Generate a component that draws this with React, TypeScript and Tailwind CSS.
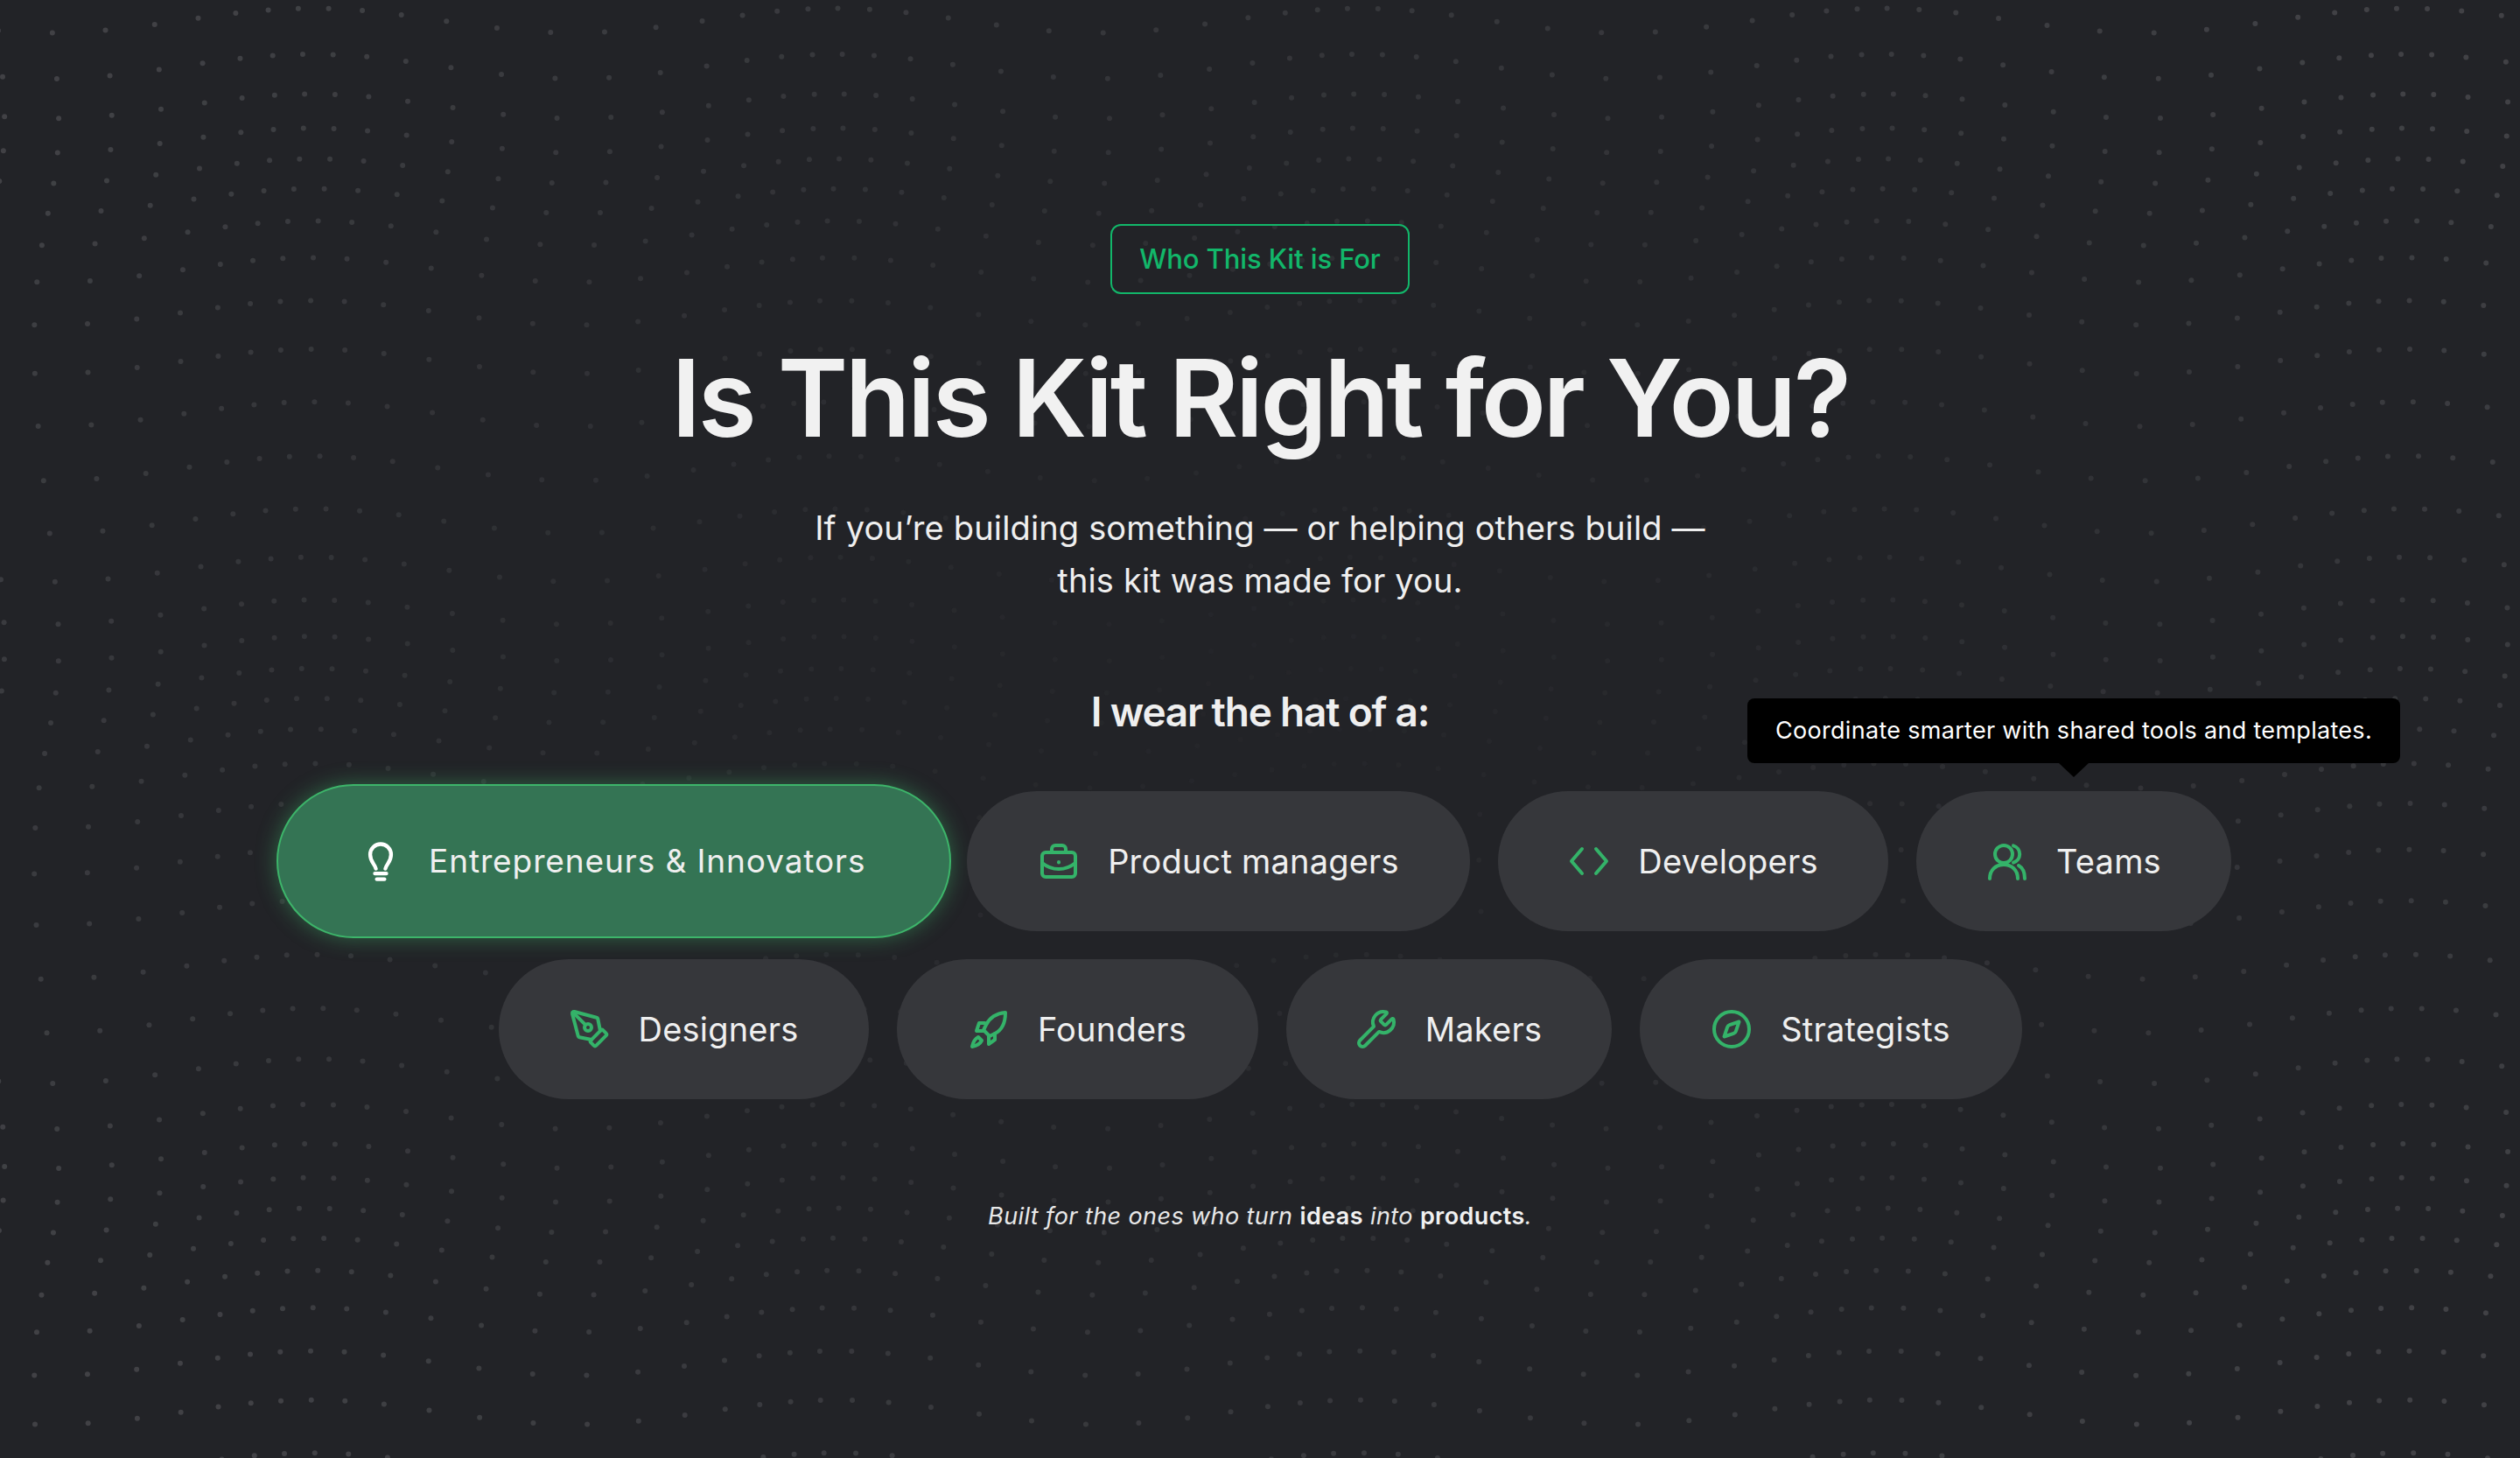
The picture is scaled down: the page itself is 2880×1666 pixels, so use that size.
import { Compass, PenTool, Wrench } from 'lucide-react'
import type { ReactNode } from 'react'

function Icon({ children, className = 'w-12 h-12' }: { children: ReactNode; className?: string }) {
  return (
    <svg className={`${className} shrink-0`} viewBox="0 0 24 24" fill="none" stroke="currentColor" strokeWidth={2} strokeLinecap="round" strokeLinejoin="round">
      {children}
    </svg>
  )
}

const BulbIcon = () => (
  <Icon className="w-[52px] h-[52px]">
    <path d="M9.5 16C9 13.5 6.5 12.5 6.5 8.5a5.5 5.5 0 0 1 11 0c0 4-2.5 5-3 7.5" />
    <path d="M9 18.5h6" />
    <path d="M10 21.5h4" />
  </Icon>
)

const CaseIcon = () => (
  <Icon>
    <rect x="2.5" y="7" width="19" height="14" rx="2" />
    <path d="M8 7V5a2 2 0 0 1 2-2h4a2 2 0 0 1 2 2v2" />
    <path d="M2.5 13c3 2.5 6 3.5 9.5 3.5s6.5-1 9.5-3.5" />
    <path d="M12 12.5v.2" />
  </Icon>
)

const ChevronsIcon = () => (
  <Icon>
    <path d="M8 5l-6 7 6 7" />
    <path d="M16 5l6 7-6 7" />
  </Icon>
)

const TeamIcon = () => (
  <Icon>
    <circle cx="10" cy="8" r="5" />
    <path d="M2 22c0-5 3.5-8 8-8s8 3 8 8" />
    <path d="M15.5 3.2a5 5 0 0 1 0 9.6" />
    <path d="M18.5 14.5c2.2 1.2 3.5 4 3.5 7.5" />
  </Icon>
)

const RocketIcon = () => (
  <Icon>
    <path d="M21.5 2.5c-5 .5-9 3-11 7L9 12.5l3.5 3.5 3-1.5c4-2 6-6 6-12z" />
    <path d="M9.8 8.5H6.5L5 13h4.5" />
    <path d="M15.5 14.5V18l-3.5 2.5V16" />
    <path d="M6 16.5c-2 1-3 3-3.5 5.5 2.5-.5 4.5-1.5 5.5-3.5z" />
  </Icon>
)

const pills = [
  { label: 'Product managers', icon: <CaseIcon />, width: 'w-[575px]' },
  { label: 'Developers', icon: <ChevronsIcon />, width: 'w-[446px]' },
  { label: 'Teams', icon: <TeamIcon />, width: 'w-[360px]', tip: 'Coordinate smarter with shared tools and templates.' },
  { label: 'Designers', icon: <PenTool className="w-12 h-12 shrink-0" strokeWidth={2} />, width: 'w-[423px]' },
  { label: 'Founders', icon: <RocketIcon />, width: 'w-[413px]' },
  { label: 'Makers', icon: <Wrench className="w-12 h-12 shrink-0" strokeWidth={2} />, width: 'w-[372px]' },
  { label: 'Strategists', icon: <Compass className="w-12 h-12 shrink-0" strokeWidth={2} />, width: 'w-[437px]' },
]

// warped dot field behind the page
function Dots() {
  const dots: { x: number; y: number; o: number }[] = []
  for (let i = -4; i < 66; i++) {
    for (let j = -4; j < 42; j++) {
      const u = i * 48
      const v = j * 48
      const x = u + 28 * Math.sin(0.0105 * u - 0.32) + 14 * Math.sin(0.0105 * v + 0.5)
      const y = v + 28 * Math.sin(0.0105 * v + 1) + 14 * Math.sin(0.0105 * x + 0.97)
      const d = Math.hypot((x - 1440) / 1440, (y - 800) / 900)
      dots.push({ x, y, o: Math.min(0.85, 0.08 + 0.6 * d ** 1.5) })
    }
  }
  return (
    <svg className="absolute inset-0 w-full h-full" viewBox="0 0 2880 1666">
      {dots.map((d, i) => (
        <circle key={i} cx={d.x} cy={d.y} r={3} fill="#46474b" opacity={d.o} />
      ))}
    </svg>
  )
}

export default function App() {
  return (
    <div className="relative h-[1666px] overflow-hidden bg-[#222327] font-['Inter',sans-serif] text-[#efefef]">
      <Dots />
      <main className="relative flex flex-col items-center pt-[256px]">
        <div className="h-20 w-[342px] flex items-center justify-center rounded-xl border-2 border-[#12b76a] text-[31px] font-medium tracking-[-0.1px] text-[#12b76a]">
          Who This Kit is For
        </div>
        <h1 className="mt-[42px] text-[122px] leading-[154px] font-semibold tracking-[-3.4px] text-[#f1f1f1]">Is This Kit Right for You?</h1>
        <p className="mt-[41px] text-[38px] leading-[60px] text-center tracking-[0.15px]">
          If you’re building something — or helping others build —
          <br />
          this kit was made for you.
        </p>
        <h2 className="mt-[88px] text-[46px] leading-[64px] font-semibold tracking-[-1.2px]">I wear the hat of a:</h2>
        <div className="mt-[59px] max-w-[2400px] flex flex-wrap justify-center gap-8">
          <div className="h-[176px] w-[771px] -mx-[14px] -my-2 flex items-center pl-[91px] gap-[29px] rounded-full border-2 border-[#3db56a] bg-[#347454] text-white shadow-[0_0_24px_rgba(61,181,106,0.45)]">
            <BulbIcon />
            <span className="text-[37px] text-[#efefef] tracking-[0.9px] whitespace-nowrap">Entrepreneurs &amp; Innovators</span>
          </div>
          {pills.map(p => (
            <div key={p.label} className={`relative h-40 ${p.width} flex items-center justify-center gap-8 rounded-full bg-[#36373b] text-[#34b369]`}>
              {p.icon}
              <span className="text-[38px] text-[#efefef] tracking-[0.2px] whitespace-nowrap">{p.label}</span>
              {p.tip && (
                <div className="absolute bottom-full left-1/2 -translate-x-1/2 mb-8 px-8 h-[74px] flex items-center rounded-lg bg-black text-[27px] tracking-[0.3px] text-white whitespace-nowrap">
                  {p.tip}
                  <span className="absolute top-full left-1/2 -translate-x-1/2 w-0 h-0 border-x-[17px] border-x-transparent border-t-[16px] border-t-black" />
                </div>
              )}
            </div>
          ))}
        </div>
        <p className="mt-[114px] text-[27px] leading-10 italic tracking-[0.4px] text-[#e8e8e8]">
          Built for the ones who turn <b className="not-italic font-semibold text-[#f1f1f1]">ideas</b> into <b className="not-italic font-semibold text-[#f1f1f1]">products</b>.
        </p>
      </main>
    </div>
  )
}
